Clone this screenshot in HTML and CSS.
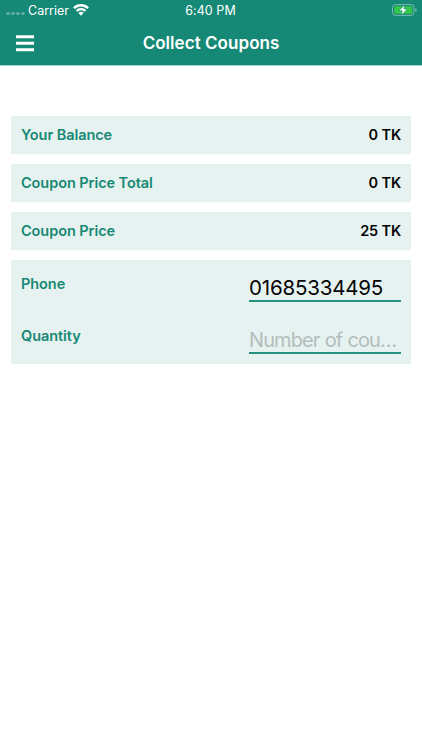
FILE: index.html
```html
<!DOCTYPE html>
<html lang="en">
<head>
<meta charset="utf-8">
<title>Collect Coupons</title>
<link rel="stylesheet" href="styles.css">
</head>
<body>
<header class="header">
  <div class="status">
    <div class="carrier">
      <span class="signal"><i></i><i></i><i></i><i></i></span>
      <span class="carrier-name">Carrier</span>
      <svg class="wifi" viewBox="0 0 16 12" width="16" height="12"><g fill="none" stroke="#fff" stroke-width="2.3"><path d="M.9 4.2a10 10 0 0 1 14.2 0"/><path d="M3.5 7a6.4 6.4 0 0 1 9 0"/></g><path fill="#fff" d="M5.4 9a3.7 3.7 0 0 1 5.2 0L8 11.7z"/></svg>
    </div>
    <time class="clock">6:40 PM</time>
    <svg class="battery" viewBox="0 0 26 12" width="26" height="12"><rect x=".5" y=".6" width="21.5" height="10.8" rx="3" fill="none" stroke="#7dbdb3"/><rect x="2.2" y="2.2" width="18.1" height="7.6" rx="1.5" fill="#34c84a"/><path d="M23.3 4v4q1.4-.6 1.4-2t-1.4-2z" fill="#7dbdb3"/><path d="M12.8.7 6.8 6.8h3.4L9.3 11.3l6-6.3h-3.4z" fill="#fff" stroke="#168a78" stroke-width=".6"/></svg>
  </div>
  <div class="navbar">
    <svg class="menu" viewBox="0 0 18 17" width="18" height="17"><path d="M0 1.7h18M0 8.2h18M0 14.7h18" stroke="#fff" stroke-width="3"/></svg>
    <h1 class="title">Collect Coupons</h1>
  </div>
</header>
<main class="content">
  <div class="row"><span class="label">Your Balance</span><span class="value">0 TK</span></div>
  <div class="row"><span class="label">Coupon Price Total</span><span class="value">0 TK</span></div>
  <div class="row"><span class="label">Coupon Price</span><span class="value">25 TK</span></div>
  <form class="form">
    <label class="field"><span class="label">Phone</span><input class="input phone" type="text" value="01685334495"></label>
    <label class="field"><span class="label">Quantity</span><input class="input quantity" type="text" placeholder="Number of coupons"></label>
  </form>
</main>
</body>
</html>
```
FILE: styles.css
```css
* { box-sizing: border-box; }
body { margin: 0; background: #fff; font-family: Inter, "Liberation Sans", sans-serif; color: #050505; }
.header { height: 66px; background: #158976; color: #fff; border-bottom: 1px solid #a5d4cd; }
.status { display: grid; grid-template-columns: 1fr auto 1fr; height: 20px; align-items: center; padding: 0 5px 0 5px; font-size: 12.5px; }
.carrier { display: flex; align-items: center; }
.signal { display: flex; gap: 1px; width: 23px; padding: 7px 0 0 1px; }
.signal i { width: 4px; height: 3px; border-radius: 50%; background: #60afa3; }
.carrier-name { letter-spacing: 0; }
.wifi { margin-left: 4px; }
.clock { letter-spacing: .05px; margin-right: 1px; }
.battery { justify-self: end; margin-right: -1px; }
.navbar { display: grid; grid-template-columns: 1fr auto 1fr; align-items: center; height: 45px; padding: 0 16px; }
.title { margin: 0; font-size: 17px; font-weight: 600; letter-spacing: .05px; }
.menu { margin-top: 1px; }
.content { display: flex; flex-direction: column; gap: 10.4px; padding: 50.4px 11px 0; }
.row { display: flex; justify-content: space-between; align-items: center; height: 37.5px; padding: 0 10px 1px; background: #e6f2f0; font-size: 14.5px; font-weight: 600; }
.row:nth-child(3) { padding-bottom: 0; }
.label { color: #168875; letter-spacing: -.07px; }
.value { letter-spacing: -.15px; }
.form { height: 103.5px; padding: 0 10px; background: #e6f2f0; font-size: 14.5px; font-weight: 600; }
.field { display: flex; justify-content: space-between; height: 52px; padding-top: 10px; }
.field .label { line-height: 27px; }
.input { width: 152px; height: 32px; padding: 5px 0 0; border: 0; border-bottom: 2px solid #239280; border-radius: 0; outline: 0; background: transparent; color: #050505; font: 400 20.5px Inter, "Liberation Sans", sans-serif; letter-spacing: -.18px; text-overflow: ellipsis; }
.quantity { font-size: 20px; letter-spacing: -.9px; word-spacing: .5px; }
.input::placeholder { color: #b4bdbc; opacity: 1; text-overflow: ellipsis; }
```
